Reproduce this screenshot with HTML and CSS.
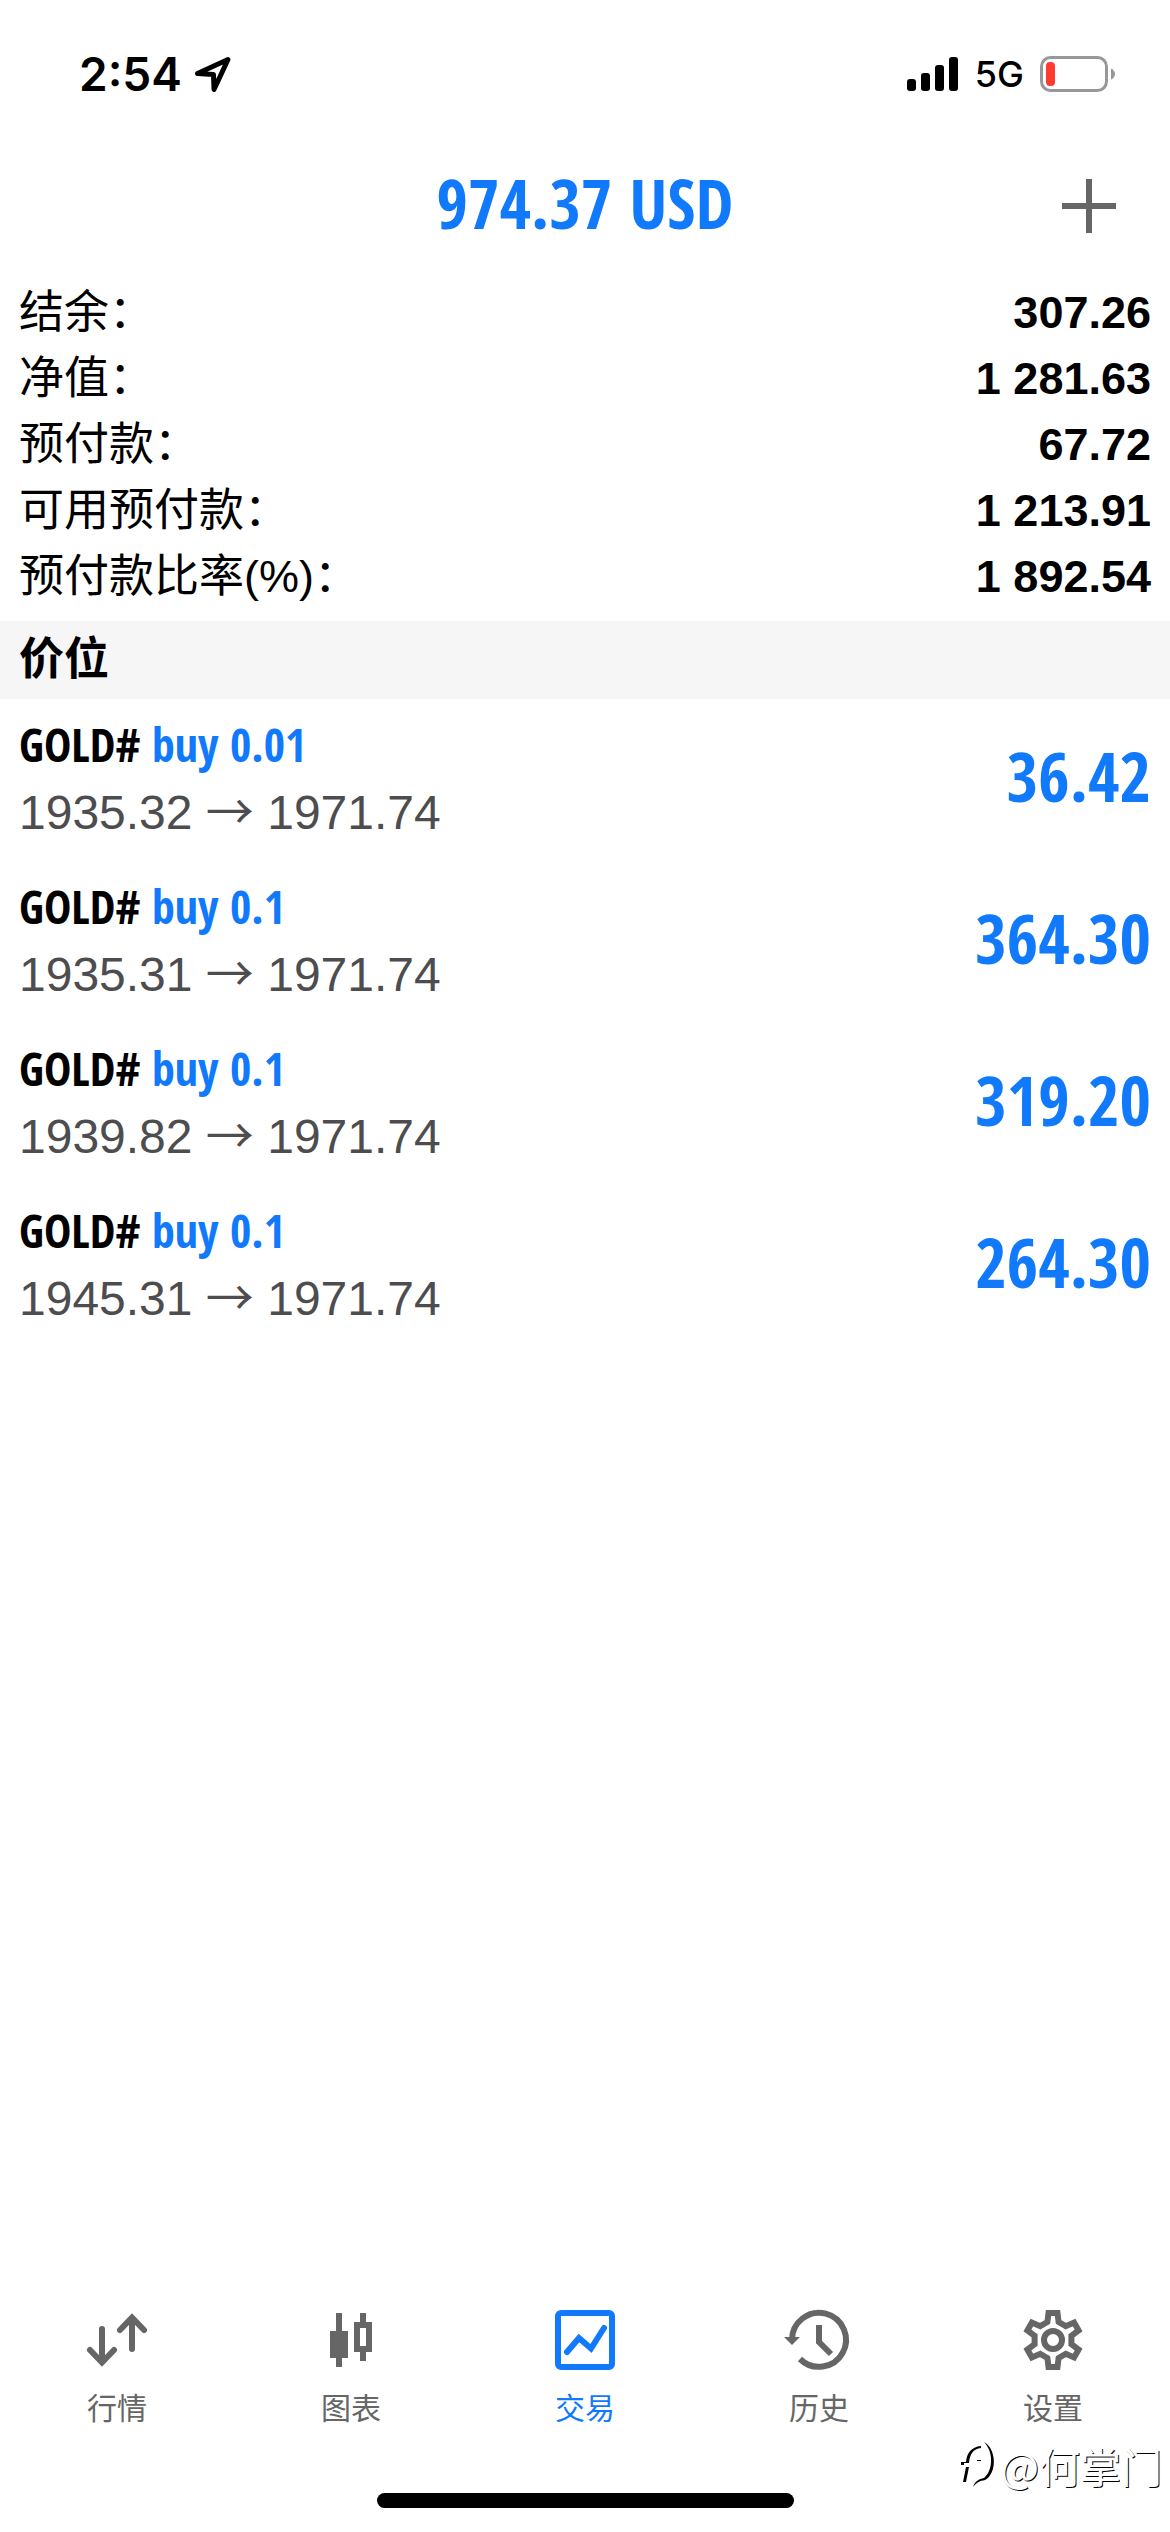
FILE: index.html
```
<!DOCTYPE html>
<html lang="zh-CN">
<head>
<meta charset="utf-8">
<meta name="viewport" content="width=device-width">
<title>交易</title>
<link rel="stylesheet" href="styles.css">
</head>
<body>
<div class="status-bar">
  <div class="status-group">
    <span class="clock">2:54</span>
    <svg class="location" width="40" height="36" viewBox="0 0 40 36" aria-hidden="true"><path d="M3.5 17.5 34 3.5 20 33.5 19.5 18.5Z"/></svg>
  </div>
  <div class="status-group status-group-end">
    <svg width="52" height="36" viewBox="0 0 52 36" aria-hidden="true"><rect x="0" y="23" width="9" height="12" rx="3"/><rect x="14" y="17" width="9" height="18" rx="3"/><rect x="28" y="9" width="9" height="26" rx="3"/><rect x="42" y="1" width="9" height="34" rx="3"/></svg>
    <span class="network">5G</span>
    <svg width="76" height="36" viewBox="0 0 76 36" aria-hidden="true"><rect x="1.5" y="1.5" width="65" height="33" rx="9" fill="none" stroke="#97989a" stroke-width="3"/><rect x="6" y="6" width="9" height="24" rx="4" fill="#fe3b30"/><path d="M71 12.5q4 2 4 5.500t-4 5.500z" fill="#97989a"/></svg>
  </div>
</div>

<header class="header">
  <h1 class="title">974.37 USD</h1>
  <button class="add" type="button" aria-label="新订单"><svg width="54" height="54" viewBox="0 0 54 54"><path d="M24 0h6v24h24v6H30v24h-6V30H0v-6h24z" fill="#666"/></svg></button>
</header>

<main class="content">
  <dl class="summary">
    <div class="summary-row"><dt>结余：</dt><dd>307.26</dd></div>
    <div class="summary-row"><dt>净值：</dt><dd>1 281.63</dd></div>
    <div class="summary-row"><dt>预付款：</dt><dd>67.72</dd></div>
    <div class="summary-row"><dt>可用预付款：</dt><dd>1 213.91</dd></div>
    <div class="summary-row"><dt>预付款比率(%)：</dt><dd>1 892.54</dd></div>
  </dl>
  <h2 class="section-title">价位</h2>
  <ul class="positions">
    <li class="position">
      <div class="position-info">
        <div class="symbol">GOLD# <span class="side">buy 0.01</span></div>
        <div class="prices">1935.32 <span class="arrow">→</span> 1971.74</div>
      </div>
      <div class="profit">36.42</div>
    </li>
    <li class="position">
      <div class="position-info">
        <div class="symbol">GOLD# <span class="side">buy 0.1</span></div>
        <div class="prices">1935.31 <span class="arrow">→</span> 1971.74</div>
      </div>
      <div class="profit">364.30</div>
    </li>
    <li class="position">
      <div class="position-info">
        <div class="symbol">GOLD# <span class="side">buy 0.1</span></div>
        <div class="prices">1939.82 <span class="arrow">→</span> 1971.74</div>
      </div>
      <div class="profit">319.20</div>
    </li>
    <li class="position">
      <div class="position-info">
        <div class="symbol">GOLD# <span class="side">buy 0.1</span></div>
        <div class="prices">1945.31 <span class="arrow">→</span> 1971.74</div>
      </div>
      <div class="profit">264.30</div>
    </li>
  </ul>
</main>

<nav class="tabs">
  <a class="tab" href="#quotes">
    <svg class="icon icon-round" viewBox="0 0 60 60" aria-hidden="true"><path d="M15 19v33M3 40l12 12.500L27 40M45 39V8M33 20 45 7.500 57 20"/></svg>
    行情
  </a>
  <a class="tab" href="#charts">
    <svg class="icon" viewBox="0 0 60 60" aria-hidden="true"><path d="M18 3v54M42 3v12M42 39v12M36 15h12v24H36z"/><path d="M9 21h18v27H9z" fill="currentColor" stroke="none"/></svg>
    图表
  </a>
  <a class="tab tab-active" href="#trade" aria-current="page">
    <svg class="icon icon-round" viewBox="0 0 60 60" aria-hidden="true"><rect x="3" y="3" width="54" height="54" rx="3"/><path d="M12 42 24 28l12 10.500L49 18" stroke-linejoin="miter"/></svg>
    交易
  </a>
  <a class="tab" href="#history">
    <svg class="icon" viewBox="0 0 60 60" aria-hidden="true"><path d="M3 30A27 27 0 1 1 11 49M30 15v17l12 12"/><path d="M-5 27h16l-8 8z" fill="currentColor" stroke="none"/></svg>
    历史
  </a>
  <a class="tab" href="#settings">
    <svg class="icon" viewBox="-30 -30 60 60" aria-hidden="true"><path d="M-5.600-18-4.500-27H4.500L5.600-18 12.800-13.850 21.100-17.400 25.600-9.600 18.400-4.150V4.150L25.600 9.600 21.100 17.400 12.800 13.850 5.600 18 4.500 27H-4.500L-5.600 18-12.800 13.850-21.100 17.400-25.600 9.600-18.400 4.150V-4.150L-25.600-9.600-21.100-17.400-12.800-13.850Z"/><circle r="9"/></svg>
    设置
  </a>
</nav>
<div class="home-indicator"></div>

<div class="watermark">
  <svg width="36" height="48" viewBox="0 0 36 48" aria-hidden="true"><path d="M1 24v-3h5C7 12 11 6 21 5v2C13 8 10 13 9 22H4v2zM6 26h3L6 41H3zM24 1c13 7 13 32 1 38-5 1-8 2-12 7 2-6 6-8 11-9C33 30 34 11 24 1zM17 19h4v1h-4z"/></svg>
  <span>@何掌门</span>
</div>
</body>
</html>
```
FILE: styles.css
```
* { box-sizing: border-box; }

body {
  margin: 0;
  min-height: 100vh;
  position: relative;
  display: flex;
  flex-direction: column;
  background: #fff;
  color: #000;
  font-family: "Liberation Sans", "Noto Sans CJK SC", sans-serif;
}

h1, h2, dl, dd, ul { margin: 0; padding: 0; }
ul { list-style: none; }
svg { display: block; flex: none; overflow: visible; }

.status-bar {
  display: flex;
  justify-content: space-between;
  align-items: center;
  height: 148px;
  padding: 0 54px 0 79px;
  font-family: Inter, sans-serif;
}
.status-group { display: flex; align-items: center; gap: 12px; }
.status-group-end { gap: 16px; }
.clock { font-size: 46px; font-weight: 600; }
.network { font-size: 36px; font-weight: 500; }
.location { fill: none; stroke: #000; stroke-width: 5; stroke-linejoin: round; }

.header {
  display: grid;
  grid-template-columns: 1fr auto 1fr;
  align-items: center;
  height: 116px;
  padding: 0 54px;
}
.title {
  grid-column: 2;
  padding-bottom: 6px;
  color: #1079fc;
  font: 700 68px/92px "Open Sans Condensed", "Roboto Condensed", sans-serif;
}
.add {
  justify-self: end;
  padding: 0;
  border: 0;
  background: none;
}

.content { flex: 1; }
.summary { padding: 16px 19px 11px; }
.summary-row {
  display: flex;
  justify-content: space-between;
  height: 66px;
  line-height: 66px;
  font-size: 45px;
}
.summary-row dd { font-weight: 700; }

.section-title {
  height: 78px;
  padding: 0 19px;
  background: #f6f6f6;
  font-size: 45px;
  font-weight: 700;
  line-height: 78px;
}

.position {
  display: flex;
  justify-content: space-between;
  align-items: center;
  height: 162px;
  padding: 0 19px;
}
.symbol { font: 700 46px/66px "Open Sans Condensed", "Roboto Condensed", sans-serif; }
.side { color: #1079fc; }
.prices { color: #4d4d4f; font-size: 48px; line-height: 72px; }
.arrow { font-family: "Noto Sans CJK SC", sans-serif; line-height: 1; }
.profit {
  padding-bottom: 8px;
  color: #1079fc;
  font: 700 68px/92px "Open Sans Condensed", "Roboto Condensed", sans-serif;
}

.tabs { display: flex; }
.tab {
  flex: 1;
  display: flex;
  flex-direction: column;
  align-items: center;
  gap: 16px;
  color: #666;
  font: 400 30px/40px "Noto Sans CJK SC", sans-serif;
  text-decoration: none;
}
.tab-active { color: #1079fc; }
.icon {
  width: 60px;
  height: 60px;
  fill: none;
  stroke: currentColor;
  stroke-width: 6;
}
.icon-round { stroke-linecap: round; }

.home-indicator {
  align-self: center;
  width: 417px;
  height: 15px;
  margin: 67px 0 24px;
  border-radius: 8px;
  background: #000;
}

.watermark {
  position: absolute;
  right: 8px;
  bottom: 43px;
  display: flex;
  align-items: center;
  gap: 4px;
  color: #fff;
  font: 400 41px/48px "Noto Sans CJK SC", sans-serif;
  text-shadow: 1px 1px 0 #000;
}
```
